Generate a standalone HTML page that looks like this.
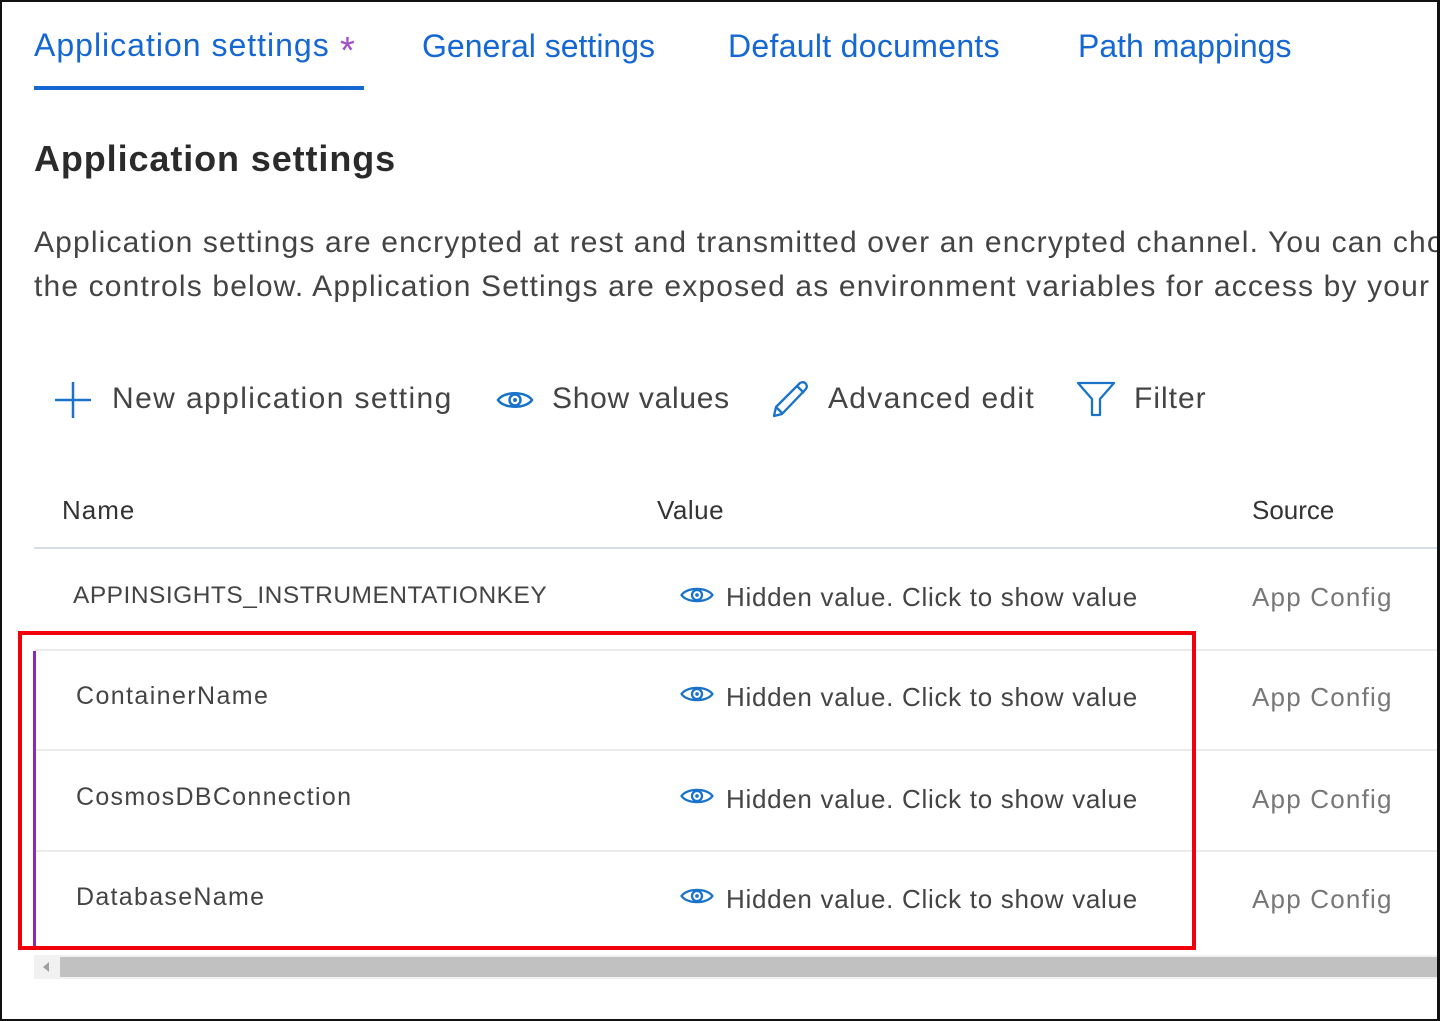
<!DOCTYPE html>
<html><head><meta charset="utf-8"><style>
*{margin:0;padding:0;box-sizing:border-box}
body{width:1440px;height:1021px;overflow:hidden;background:#fff;font-family:"Liberation Sans",sans-serif;position:relative}
.frame{position:absolute;left:0;top:0;width:1440px;height:1021px;border:2px solid #111;border-right:3px solid #111}
.t{position:absolute;white-space:nowrap;line-height:1}
.tab{color:#1567d3;font-size:32px;top:30px}
.g{color:#444}
.cell{color:#444;font-size:25px;letter-spacing:1.3px}
.src{color:#777;font-size:26px;letter-spacing:1.2px}
.hv{color:#444;font-size:26px;letter-spacing:0.7px}
.eye{position:absolute}
.line{position:absolute;height:2px;background:#edebe9}
</style></head><body>
<div class="t tab" style="left:34px;letter-spacing:1px;top:29px">Application settings</div>
<div class="t" style="left:340px;top:32px;color:#a04fc7;font-size:38px;line-height:1">*</div>
<div style="position:absolute;left:34px;top:86px;width:330px;height:4px;background:#1567d3"></div>
<div class="t tab" style="left:422px">General settings</div>
<div class="t tab" style="left:728px;letter-spacing:0.3px">Default documents</div>
<div class="t tab" style="left:1078px">Path mappings</div>

<div class="t" style="left:34px;top:141px;font-size:36px;font-weight:bold;color:#2b2b2b;letter-spacing:0.9px">Application settings</div>

<div class="t g" style="left:34px;top:228px;font-size:30px;letter-spacing:1.15px">Application settings are encrypted at rest and transmitted over an encrypted channel. You can cho</div>
<div class="t g" style="left:34px;top:272px;font-size:30px;letter-spacing:1.15px">the controls below. Application Settings are exposed as environment variables for access by your</div>

<svg style="position:absolute;left:54px;top:381px" width="38" height="38"><path d="M19 1v36M1 19h36" stroke="#1a73c8" stroke-width="2.5" fill="none"/></svg>
<div class="t g" style="left:112px;top:384px;font-size:30px;letter-spacing:1.4px">New application setting</div>
<svg class="eye" style="left:496px;top:389px" width="38" height="22" viewBox="0 0 38 22"><path d="M2 11C8 2 30 2 36 11C30 20 8 20 2 11Z" stroke="#1a73c8" stroke-width="2.5" fill="none"/><circle cx="19" cy="11" r="5.5" stroke="#1a73c8" stroke-width="2.5" fill="none"/><circle cx="19" cy="11" r="2" fill="#1a73c8"/></svg>
<div class="t g" style="left:552px;top:384px;font-size:30px;letter-spacing:0.7px">Show values</div>
<svg style="position:absolute;left:771px;top:380px" width="40" height="40" viewBox="0 0 40 40"><path d="M3 36l2-9L29 3q4-2 6 1t-1 6L11 34z M26 6l7 7 M5 27l6 6" stroke="#1a73c8" stroke-width="2.3" fill="none" stroke-linejoin="round"/></svg>
<div class="t g" style="left:828px;top:384px;font-size:30px;letter-spacing:1.3px">Advanced edit</div>
<svg style="position:absolute;left:1076px;top:381px" width="40" height="36" viewBox="0 0 40 36"><path d="M2 2h36L24 18v16h-8V18z" stroke="#1a73c8" stroke-width="2.3" fill="none" stroke-linejoin="round"/></svg>
<div class="t g" style="left:1134px;top:384px;font-size:30px;letter-spacing:1px">Filter</div>

<div class="t" style="left:62px;top:497px;font-size:26px;color:#333;letter-spacing:1px">Name</div>
<div class="t" style="left:657px;top:497px;font-size:26px;color:#333;letter-spacing:0.5px">Value</div>
<div class="t" style="left:1252px;top:497px;font-size:26px;color:#333">Source</div>
<div class="line" style="left:34px;top:547px;width:1406px;background:#d8dde3"></div>

<div class="t cell" style="left:73px;top:584px;font-size:24.5px;letter-spacing:0.5px">APPINSIGHTS_INSTRUMENTATIONKEY</div>
<div class="t cell" style="left:76px;top:684px;letter-spacing:1.4px">ContainerName</div>
<div class="t cell" style="left:76px;top:785px">CosmosDBConnection</div>
<div class="t cell" style="left:76px;top:885px">DatabaseName</div>

<div class="line" style="left:34px;top:649px;width:1406px"></div>
<div class="line" style="left:34px;top:749px;width:1406px"></div>
<div class="line" style="left:34px;top:850px;width:1406px"></div>

<svg class="eye" style="left:678px;top:585px" width="38" height="20" viewBox="0 0 38 22"><path d="M2 11C8 2 30 2 36 11C30 20 8 20 2 11Z" stroke="#1a73c8" stroke-width="2.5" fill="none"/><circle cx="19" cy="11" r="5.5" stroke="#1a73c8" stroke-width="2.5" fill="none"/><circle cx="19" cy="11" r="2" fill="#1a73c8"/></svg>
<svg class="eye" style="left:678px;top:684px" width="38" height="20" viewBox="0 0 38 22"><path d="M2 11C8 2 30 2 36 11C30 20 8 20 2 11Z" stroke="#1a73c8" stroke-width="2.5" fill="none"/><circle cx="19" cy="11" r="5.5" stroke="#1a73c8" stroke-width="2.5" fill="none"/><circle cx="19" cy="11" r="2" fill="#1a73c8"/></svg>
<svg class="eye" style="left:678px;top:786px" width="38" height="20" viewBox="0 0 38 22"><path d="M2 11C8 2 30 2 36 11C30 20 8 20 2 11Z" stroke="#1a73c8" stroke-width="2.5" fill="none"/><circle cx="19" cy="11" r="5.5" stroke="#1a73c8" stroke-width="2.5" fill="none"/><circle cx="19" cy="11" r="2" fill="#1a73c8"/></svg>
<svg class="eye" style="left:678px;top:886px" width="38" height="20" viewBox="0 0 38 22"><path d="M2 11C8 2 30 2 36 11C30 20 8 20 2 11Z" stroke="#1a73c8" stroke-width="2.5" fill="none"/><circle cx="19" cy="11" r="5.5" stroke="#1a73c8" stroke-width="2.5" fill="none"/><circle cx="19" cy="11" r="2" fill="#1a73c8"/></svg>
<div class="t hv" style="left:726px;top:584px">Hidden value. Click to show value</div>
<div class="t hv" style="left:726px;top:684px">Hidden value. Click to show value</div>
<div class="t hv" style="left:726px;top:786px">Hidden value. Click to show value</div>
<div class="t hv" style="left:726px;top:886px">Hidden value. Click to show value</div>

<div class="t src" style="left:1252px;top:584px">App Config</div>
<div class="t src" style="left:1252px;top:684px">App Config</div>
<div class="t src" style="left:1252px;top:786px">App Config</div>
<div class="t src" style="left:1252px;top:886px">App Config</div>

<div style="position:absolute;left:33px;top:651px;width:3px;height:297px;background:#8a2bb8"></div>
<div style="position:absolute;left:18px;top:631px;width:1178px;height:319px;border:4px solid #f0000a"></div>

<div style="position:absolute;left:34px;top:955px;width:1406px;height:24px;background:#f1f1f1"></div>
<div style="position:absolute;left:60px;top:957px;width:1380px;height:20px;background:#c1c1c1"></div>
<div style="position:absolute;left:43px;top:962px;width:0;height:0;border-top:5px solid transparent;border-bottom:5px solid transparent;border-right:6px solid #a0a0a0"></div>

<div class="frame"></div>
</body></html>
